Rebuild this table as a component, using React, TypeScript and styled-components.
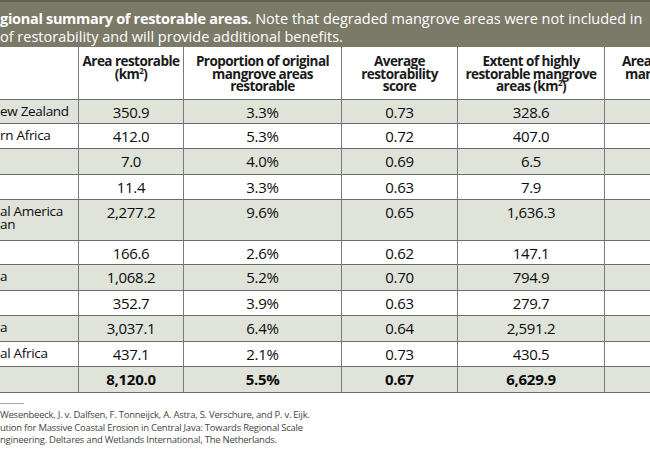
import React from "react";
import styled, { createGlobalStyle } from "styled-components";

const Global = createGlobalStyle`
  html, body { margin: 0; padding: 0; background: #ffffff; overflow: hidden; }
  body { width: 650px; height: 451px; font-family: "Open Sans", "Noto Sans", sans-serif; color: #0c0c0c; }
`;

const Page = styled.div`
  width: 650px;
  height: 451px;
  overflow: hidden;
  display: flex;
  flex-direction: column;
`;

const Band = styled.div`
  height: 47px;
  box-sizing: border-box;
  background: #7b7968;
  border-top: 2px solid #636150;
  padding-top: 8px;
  color: #ffffff;
  font-size: 14.5px;
  line-height: 18px;
  white-space: nowrap;
  overflow: hidden;
`;

const Strong = styled.span`
  font-weight: 700;
  letter-spacing: -0.3px;
`;

const Table = styled.div`
  display: flex;
  flex-direction: column;
`;

const Row = styled.div<{ $shade?: boolean; $h: number; $bold?: boolean }>`
  display: grid;
  grid-template-columns: 79px 105px 158px 116px 147px 1fr;
  height: ${(p) => p.$h}px;
  background: ${(p) => (p.$shade ? "#dfe3da" : "#ffffff")};
  font-weight: ${(p) => (p.$bold ? 700 : 400)};
`;

const Cell = styled.div<{ $last?: boolean }>`
  box-sizing: border-box;
  border-right: ${(p) => (p.$last ? "none" : "1px solid #7a7a7a")};
  border-bottom: 1px solid #6c6c6c;
  padding-top: 4px;
  font-size: 15px;
  line-height: 16px;
  letter-spacing: -0.3px;
  text-align: center;
  white-space: nowrap;
  overflow: hidden;
`;

const LabelCell = styled(Cell)`
  padding-top: 5px;
  font-size: 13.5px;
  line-height: 13px;
  text-align: left;
`;

const HeadRow = styled.div`
  display: grid;
  grid-template-columns: 79px 105px 158px 116px 147px 1fr;
  height: 53px;
  background: #ffffff;
`;

const HeadCell = styled.div<{ $last?: boolean }>`
  box-sizing: border-box;
  border-right: ${(p) => (p.$last ? "none" : "1px solid #7a7a7a")};
  border-bottom: 1px solid #6c6c6c;
  padding-top: 8px;
  font-size: 13.5px;
  font-weight: 700;
  line-height: 12.5px;
  letter-spacing: -0.55px;
  text-align: center;
  color: #1a1a1a;
  white-space: nowrap;
  overflow: hidden;
`;

const CutLine = styled.div<{ $indent: number }>`
  text-align: left;
  padding-left: ${(p) => p.$indent}px;
`;

const Sup = styled.sup`
  font-size: 8px;
  line-height: 0;
  vertical-align: 5px;
`;

const Foot = styled.div`
  padding-top: 10px;
  display: flex;
  flex-direction: column;
`;

const Rule = styled.div`
  width: 24px;
  height: 1px;
  background: #a9a9a9;
  margin-bottom: 5px;
`;

const FootText = styled.div`
  font-size: 9.5px;
  line-height: 12.5px;
  letter-spacing: -0.25px;
  color: #444444;
  white-space: nowrap;
`;

type R = { label: string[]; v: string[]; shade?: boolean; bold?: boolean; h: number };

const rows: R[] = [
  { label: ["ew Zealand"], v: ["350.9", "3.3%", "0.73", "328.6"], shade: true, h: 24 },
  { label: ["rn Africa"], v: ["412.0", "5.3%", "0.72", "407.0"], h: 25 },
  { label: [""], v: ["7.0", "4.0%", "0.69", "6.5"], shade: true, h: 26 },
  { label: [""], v: ["11.4", "3.3%", "0.63", "7.9"], h: 25 },
  { label: ["al America", "an"], v: ["2,277.2", "9.6%", "0.65", "1,636.3"], shade: true, h: 41 },
  { label: [""], v: ["166.6", "2.6%", "0.62", "147.1"], h: 24 },
  { label: ["a"], v: ["1,068.2", "5.2%", "0.70", "794.9"], shade: true, h: 26 },
  { label: [""], v: ["352.7", "3.9%", "0.63", "279.7"], h: 25 },
  { label: ["a"], v: ["3,037.1", "6.4%", "0.64", "2,591.2"], shade: true, h: 26 },
  { label: ["al Africa"], v: ["437.1", "2.1%", "0.73", "430.5"], h: 25 },
  { label: [""], v: ["8,120.0", "5.5%", "0.67", "6,629.9"], shade: true, bold: true, h: 26 },
];

export default function App() {
  return (
    <Page>
      <Global />
      <Band>
        <div>
          <Strong>gional summary of restorable areas.</Strong> Note that degraded mangrove areas were not included in
        </div>
        <div>of restorability and will provide additional benefits.</div>
      </Band>
      <Table>
        <HeadRow>
          <HeadCell />
          <HeadCell>
            Area restorable
            <br />
            (km<Sup>2</Sup>)
          </HeadCell>
          <HeadCell>
            Proportion of original
            <br />
            mangrove areas
            <br />
            restorable
          </HeadCell>
          <HeadCell>
            Average
            <br />
            restorability
            <br />
            score
          </HeadCell>
          <HeadCell>
            Extent of highly
            <br />
            restorable mangrove
            <br />
            areas (km<Sup>2</Sup>)
          </HeadCell>
          <HeadCell $last>
            <CutLine $indent={17}>Area</CutLine>
            <CutLine $indent={20}>man</CutLine>
          </HeadCell>
        </HeadRow>
        {rows.map((r, i) => (
          <Row key={i} $shade={r.shade} $h={r.h} $bold={r.bold}>
            <LabelCell>
              {r.label.map((l, j) => (
                <div key={j}>{l}</div>
              ))}
            </LabelCell>
            {r.v.map((v, j) => (
              <Cell key={j}>{v}</Cell>
            ))}
            <Cell $last />
          </Row>
        ))}
      </Table>
      <Foot>
        <Rule />
        <FootText>Wesenbeeck, J. v. Dalfsen, F. Tonneijck, A. Astra, S. Verschure, and P. v. Eijk.</FootText>
        <FootText>ution for Massive Coastal Erosion in Central Java: Towards Regional Scale</FootText>
        <FootText>ngineering. Deltares and Wetlands International, The Netherlands.</FootText>
      </Foot>
    </Page>
  );
}
